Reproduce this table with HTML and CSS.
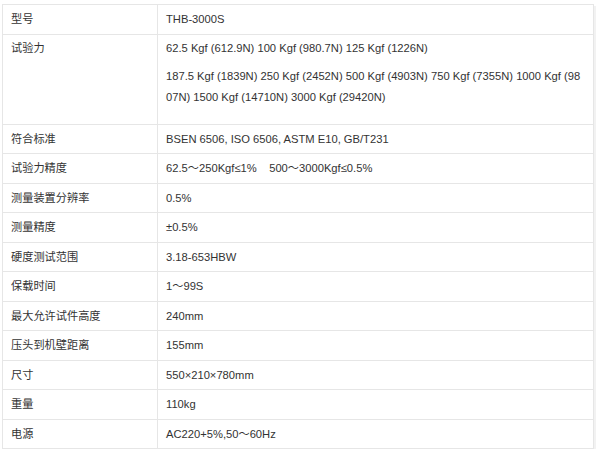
FILE: index.html
```html
<!DOCTYPE html>
<html lang="zh">
<head>
<meta charset="utf-8">
<link rel="stylesheet" href="styles.css">
</head>
<body>
<table class="spec">
  <tbody>
    <tr><td class="k">型号</td><td class="v">THB-3000S</td></tr>
    <tr><td class="k">试验力</td><td class="v">
      <p class="p1">62.5 Kgf (612.9N) 100 Kgf (980.7N) 125 Kgf (1226N)</p>
      <p class="p2">187.5 Kgf (1839N) 250 Kgf (2452N) 500 Kgf (4903N) 750 Kgf (7355N) 1000 Kgf (9807N) 1500 Kgf (14710N) 3000 Kgf (29420N)</p>
    </td></tr>
    <tr><td class="k">符合标准</td><td class="v">BSEN 6506, ISO 6506, ASTM E10, GB/T231</td></tr>
    <tr><td class="k">试验力精度</td><td class="v">62.5～250Kgf≤1%&nbsp;&nbsp;&nbsp;&nbsp;500～3000Kgf≤0.5%</td></tr>
    <tr><td class="k">测量装置分辨率</td><td class="v">0.5%</td></tr>
    <tr><td class="k">测量精度</td><td class="v">±0.5%</td></tr>
    <tr><td class="k">硬度测试范围</td><td class="v">3.18-653HBW</td></tr>
    <tr><td class="k">保载时间</td><td class="v">1～99S</td></tr>
    <tr><td class="k">最大允许试件高度</td><td class="v">240mm</td></tr>
    <tr><td class="k">压头到机壁距离</td><td class="v">155mm</td></tr>
    <tr><td class="k">尺寸</td><td class="v">550×210×780mm</td></tr>
    <tr><td class="k">重量</td><td class="v">110kg</td></tr>
    <tr><td class="k">电源</td><td class="v">AC220+5%,50～60Hz</td></tr>
  </tbody>
</table>
</body>
</html>
```
FILE: styles.css
```css
html, body {
  margin: 0;
  background: #ffffff;
}
body {
  padding: 4px 0 0 2px;
  font-family: "Liberation Sans", Arial, "Noto Sans CJK SC", sans-serif;
  font-size: 11.2px;
  color: #333333;
}
.spec {
  width: 592px;
  border-collapse: collapse;
  table-layout: fixed;
  box-shadow: 2px 2px 0 #f2f2f2;
}
.spec td {
  border: 1px solid #e6e6e6;
  padding: 3.75px 8px;
  line-height: 21px;
  vertical-align: top;
  text-align: left;
}
.spec td.k {
  width: 138px;
}
.spec td.v {
  word-break: break-all;
}
.spec p {
  margin: 0;
}
.spec p.p1 {
  margin-bottom: 7px;
}
.spec p.p2 {
  margin-bottom: 11.75px;
}
```
